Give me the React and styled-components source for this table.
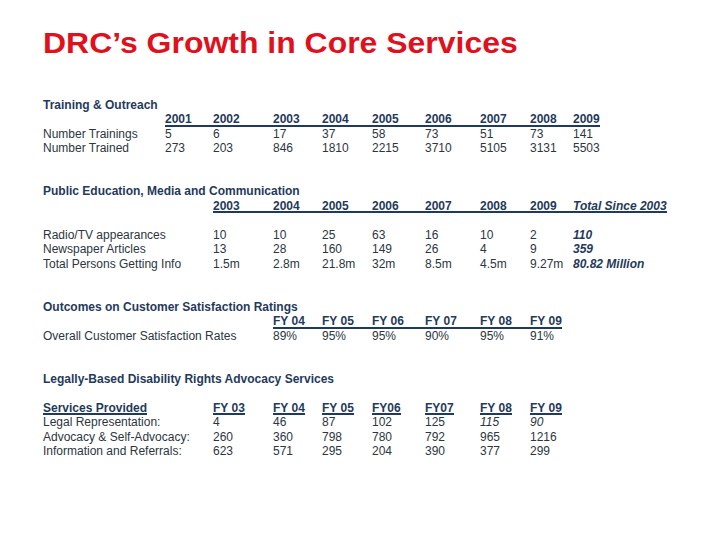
import React from "react";
import styled, { createGlobalStyle } from "styled-components";

const NAVY = "#1f3a5c";

const GlobalStyle = createGlobalStyle`
	body {
		margin: 0;
		background: #fff;
	}
`;

const Slide = styled.div`
	width: 720px;
	height: 540px;
	box-sizing: border-box;
	padding: 29px 0 0 43px;
	overflow: hidden;
	font-family: "Liberation Sans", Arial, sans-serif;
	color: #2c3541;
`;

const Title = styled.h1`
	margin: 0 0 39.75px;
	font-size: 29px;
	line-height: 29px;
	font-weight: bold;
	color: #e0101c;
	white-space: nowrap;
	transform: scaleX(1.102);
	transform-origin: left;
`;

const Section = styled.section`
	display: grid;
	grid-template-columns: 122px 48px 60px 49px 50px 53px 55px 50px 43px 94px;
	font-size: 12px;
	line-height: 14.5px;
	& + & {
		margin-top: 28.5px;
	}
`;

const Heading = styled.div`
	grid-column: 1 / -1;
	font-weight: bold;
	color: ${NAVY};
	white-space: nowrap;
`;

const Blank = styled.div`
	grid-column: 1 / -1;
	height: 14.5px;
`;

const Label = styled.div`
	grid-column: 1 / span ${(p) => p.$span || 1};
	white-space: nowrap;
`;

const Head = styled.div`
	grid-column: ${(p) => p.$col} / span ${(p) => p.$span || 1};
	font-weight: bold;
	color: ${NAVY};
	white-space: nowrap;
	font-style: ${(p) => (p.$italic ? "italic" : "normal")};
	box-shadow: ${(p) => (p.$rule ? `inset 0 -2px 0 ${NAVY}` : "none")};
`;

const Under = styled.span`
	display: inline-block;
	box-shadow: inset 0 -2px 0 ${NAVY};
`;

const Cell = styled.div`
	grid-column: ${(p) => p.$col};
	white-space: nowrap;
	font-style: ${(p) => (p.$italic ? "italic" : "normal")};
	font-weight: ${(p) => (p.$bold ? "bold" : "normal")};
	color: ${(p) => (p.$bold ? NAVY : "inherit")};
`;

const training = [
	["Number Trainings", [5, 6, 17, 37, 58, 73, 51, 73, 141]],
	["Number Trained", [273, 203, 846, 1810, 2215, 3710, 5105, 3131, 5503]],
];

const media = [
	["Radio/TV appearances", [10, 10, 25, 63, 16, 10, 2], "110"],
	["Newspaper Articles", [13, 28, 160, 149, 26, 4, 9], "359"],
	["Total Persons Getting Info", ["1.5m", "2.8m", "21.8m", "32m", "8.5m", "4.5m", "9.27m"], "80.82 Million"],
];

const legal = [
	["Legal Representation:", [4, 46, 87, 102, 125, 115, 90], [5, 6]],
	["Advocacy & Self-Advocacy:", [260, 360, 798, 780, 792, 965, 1216], []],
	["Information and Referrals:", [623, 571, 295, 204, 390, 377, 299], []],
];

const years = (from, to) => {
	const list = [];
	for (let y = from; y <= to; y++) list.push(String(y));
	return list;
};

// header row where a continuous rule runs under all columns, ending at the last label
const RuledHeader = ({ labels, start, lastItalic }) =>
	labels.map((text, i) =>
		i < labels.length - 1 ? (
			<Head key={text} $col={start + i} $rule>
				{text}
			</Head>
		) : (
			<Head key={text} $col={start + i} $italic={lastItalic}>
				<Under>{text}</Under>
			</Head>
		)
	);

export default function App() {
	return (
		<>
			<GlobalStyle />
			<Slide>
				<Title>DRC’s Growth in Core Services</Title>

				<Section>
					<Heading>Training &amp; Outreach</Heading>
					<RuledHeader labels={years(2001, 2009)} start={2} />
					{training.map(([label, values]) => (
						<React.Fragment key={label}>
							<Label>{label}</Label>
							{values.map((v, i) => (
								<Cell key={i} $col={2 + i}>
									{v}
								</Cell>
							))}
						</React.Fragment>
					))}
				</Section>

				<Section>
					<Heading>Public Education, Media and Communication</Heading>
					<RuledHeader
						labels={[...years(2003, 2009), "Total Since 2003"]}
						start={3}
						lastItalic
					/>
					<Blank />
					{media.map(([label, values, total]) => (
						<React.Fragment key={label}>
							<Label $span={2}>{label}</Label>
							{values.map((v, i) => (
								<Cell key={i} $col={3 + i}>
									{v}
								</Cell>
							))}
							<Cell $col={10} $bold $italic>
								{total}
							</Cell>
						</React.Fragment>
					))}
				</Section>

				<Section>
					<Heading>Outcomes on Customer Satisfaction Ratings</Heading>
					<RuledHeader
						labels={["FY 04", "FY 05", "FY 06", "FY 07", "FY 08", "FY 09"]}
						start={4}
					/>
					<Label $span={3}>Overall Customer Satisfaction Rates</Label>
					{["89%", "95%", "95%", "90%", "95%", "91%"].map((v, i) => (
						<Cell key={i} $col={4 + i}>
							{v}
						</Cell>
					))}
				</Section>

				<Section>
					<Heading>Legally-Based Disability Rights Advocacy Services</Heading>
					<Blank />
					<Head $col={1} $span={2}>
						<Under>Services Provided</Under>
					</Head>
					{["FY 03", "FY 04", "FY 05", "FY06", "FY07", "FY 08", "FY 09"].map((h, i) => (
						<Head key={h} $col={3 + i}>
							<Under>{h}</Under>
						</Head>
					))}
					{legal.map(([label, values, italics]) => (
						<React.Fragment key={label}>
							<Label $span={2}>{label}</Label>
							{values.map((v, i) => (
								<Cell key={i} $col={3 + i} $italic={italics.includes(i)}>
									{v}
								</Cell>
							))}
						</React.Fragment>
					))}
				</Section>
			</Slide>
		</>
	);
}
